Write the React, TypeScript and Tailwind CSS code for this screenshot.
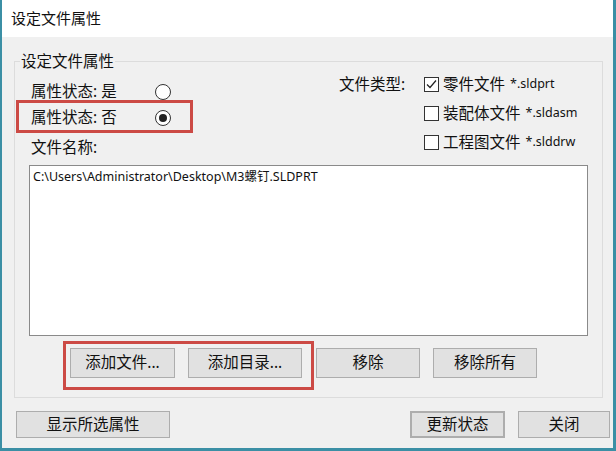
import React from 'react';

const Radio = ({ checked = false }: { checked?: boolean }) => (
  <span className="flex h-[16px] w-[16px] items-center justify-center rounded-full border border-[#333] bg-white">
    {checked && <span className="h-[8px] w-[8px] rounded-full bg-[#222]" />}
  </span>
);

const Check = ({ checked = false }: { checked?: boolean }) => (
  <span className="flex h-[15px] w-[15px] items-center justify-center border border-[#333] bg-white">
    {checked && (
      <svg width="13" height="13" viewBox="0 0 13 13" fill="none">
        <polyline points="2,6.5 5,9.5 11,2.5" stroke="#222" strokeWidth="1.2" />
      </svg>
    )}
  </span>
);

const Btn = ({ label, className = '' }: { label: string; className?: string }) => (
  <button className={`flex items-center justify-center border border-[#adadad] bg-[#e1e1e1] text-[15.5px] leading-none text-[#111] ${className}`}>
    {label}
  </button>
);

const types = [
  { name: '零件文件', ext: '*.sldprt', checked: true },
  { name: '装配体文件', ext: '*.sldasm', checked: false },
  { name: '工程图文件', ext: '*.slddrw', checked: false },
];

export default function App() {
  return (
    <div className="relative flex h-[451px] w-[616px] flex-col border-b-[3px] border-l-2 border-r-[3px] border-[#3b8fa5] bg-[#f0f0f0] font-['Noto_Sans','Noto_Sans_CJK_SC',sans-serif] text-[#111]">
      <div className="flex h-[37px] shrink-0 items-center bg-white pl-[9px] text-[15px]">设定文件属性</div>

      <fieldset className="ml-[12px] mr-[10px] mt-[15px] h-[346px] shrink-0 border border-[#dcdcdc] px-[14px] text-[15.5px]">
        <legend className="-ml-[9px] px-[1px] leading-[18px]">设定文件属性</legend>

        <div className="flex items-start">
          <div className="w-[310px] pt-[9px]">
            <div className="flex h-[26px] items-center pl-[2px]">
              <span className="w-[124px]">属性状态: 是</span>
              <Radio />
            </div>
            <div className="relative flex h-[26px] items-center pl-[2px]">
              <span className="w-[124px]">属性状态: 否</span>
              <Radio checked />
              <span className="pointer-events-none absolute left-[-13px] top-[-5px] h-[33px] w-[177px] border-[3px] border-[#cc4a45]" />
            </div>
            <div className="mt-[4px] flex h-[26px] items-center pl-[2px]">文件名称:</div>
          </div>

          <div className="flex h-[29px] w-[85px] items-center">文件类型:</div>

          <div className="flex flex-col">
            {types.map((t) => (
              <div key={t.ext} className="flex h-[29px] items-center">
                <Check checked={t.checked} />
                <span className="ml-[4px]">{t.name}</span>
                <span className="ml-[5px] text-[12.5px]">{t.ext}</span>
              </div>
            ))}
          </div>
        </div>

        <div className="mt-[4px] h-[171px] border border-[#8a8a8a] bg-white px-[3px] pt-[2px] text-[12.5px] leading-[18px]">
          {'C:\\Users\\Administrator\\Desktop\\M3螺钉.SLDPRT'}
        </div>

        <div className="mt-[12px] flex pl-[41px]">
          <div className="relative flex gap-[13px]">
            <Btn label="添加文件..." className="h-[30px] w-[105px]" />
            <Btn label="添加目录..." className="h-[30px] w-[114px]" />
            <span className="pointer-events-none absolute -bottom-[12px] -left-[7px] -right-[12px] -top-[7px] border-[3px] border-[#cc4a45]" />
          </div>
          <Btn label="移除" className="ml-[14px] h-[30px] w-[104px]" />
          <Btn label="移除所有" className="ml-[13px] h-[30px] w-[104px]" />
        </div>
      </fieldset>

      <div className="mt-[13px] flex pl-[14px] pr-[3px]">
        <Btn label="显示所选属性" className="h-[27px] w-[154px]" />
        <Btn label="更新状态" className="ml-auto h-[27px] w-[95px] border-2 border-[#2a80a8]" />
        <Btn label="关闭" className="ml-[13px] h-[27px] w-[92px]" />
      </div>
    </div>
  );
}
